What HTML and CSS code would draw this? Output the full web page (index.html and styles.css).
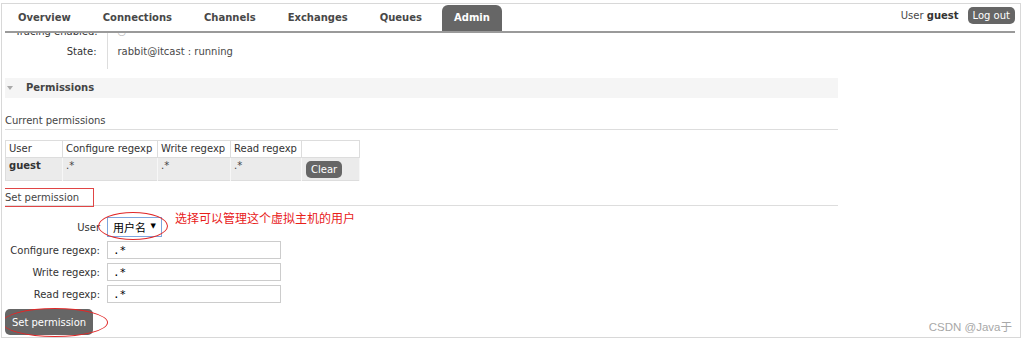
FILE: index.html
```html
<!DOCTYPE html>
<html lang="en">
<head>
    <meta charset="UTF-8">
    <meta name="viewport" content="width=device-width, initial-scale=1.0">
    <title>RabbitMQ Management - Admin</title>
    <link rel="stylesheet" href="styles.css">
</head>
<body>
    <div class="frame">
        <div class="header">
            <ul class="tabs">
                <li>Overview</li>
                <li>Connections</li>
                <li>Channels</li>
                <li>Exchanges</li>
                <li>Queues</li>
                <li class="selected">Admin</li>
            </ul>
            <div class="login">
                <span>User <b>guest</b></span>
                <button class="btn">Log out</button>
            </div>
        </div>

        <div class="main">
            <table class="facts">
                <colgroup>
                    <col style="width: 102px">
                    <col style="width: 300px">
                </colgroup>
                <tr>
                    <th>Tracing enabled:</th>
                    <td><span class="tick">○</span></td>
                </tr>
                <tr>
                    <th>State:</th>
                    <td>rabbit@itcast : running</td>
                </tr>
            </table>

            <div class="section">
                <h2><span class="arrow"></span>Permissions</h2>
                <div class="hider">
                    <h3>Current permissions</h3>
                    <table class="list">
                        <colgroup>
                            <col style="width: 57px">
                            <col style="width: 95px">
                            <col style="width: 73px">
                            <col style="width: 71px">
                            <col style="width: 58px">
                        </colgroup>
                        <tr>
                            <th>User</th>
                            <th>Configure regexp</th>
                            <th>Write regexp</th>
                            <th>Read regexp</th>
                            <th></th>
                        </tr>
                        <tr>
                            <td><b>guest</b></td>
                            <td>.*</td>
                            <td>.*</td>
                            <td>.*</td>
                            <td class="action"><button class="btn">Clear</button></td>
                        </tr>
                    </table>

                    <h3 class="marked">Set permission</h3>
                    <form class="perm-form">
                        <label for="user">User</label>
                        <div class="picker">
                            <select id="user">
                                <option>用户名</option>
                            </select>
                            <span class="ring ring-user"></span>
                            <span class="note">选择可以管理这个虚拟主机的用户</span>
                        </div>

                        <label for="configure">Configure regexp:</label>
                        <input type="text" id="configure" value=".*">

                        <label for="write">Write regexp:</label>
                        <input type="text" id="write" value=".*">

                        <label for="read">Read regexp:</label>
                        <input type="text" id="read" value=".*">
                    </form>
                    <div class="submit">
                        <button class="btn big">Set permission</button>
                        <span class="ring ring-submit"></span>
                    </div>
                </div>
            </div>
        </div>

        <span class="watermark">CSDN @Java于</span>
    </div>
</body>
</html>
```

FILE: styles.css
```css
body {
    margin: 0;
    background-color: #ffffff;
    color: #484848;
    font-family: "DejaVu Sans", Verdana, sans-serif;
    font-size: 10px;
}

.frame {
    position: relative;
    box-sizing: border-box;
    width: 1020px;
    height: 335px;
    margin: 3px 0 0 1px;
    padding: 0 5px 0 3px;
    border: 1px solid #d8d8d8;
    display: flex;
    flex-direction: column;
    overflow: hidden;
}

/* Top navigation */
.header {
    display: flex;
    justify-content: space-between;
    align-items: flex-start;
    height: 27px;
    border-bottom: 2px solid #9a9a9a;
    flex-shrink: 0;
    position: relative;
    z-index: 1;
    background-color: #ffffff;
}

.tabs {
    display: flex;
    gap: 8px;
    list-style: none;
    margin: 0;
    padding: 1px 0 0 1px;
}

.tabs li {
    height: 26px;
    line-height: 26px;
    padding: 0 12px;
    font-weight: bold;
    color: #484848;
    border-radius: 6px 6px 0 0;
}

.tabs li.selected {
    background-color: #666666;
    color: #ffffff;
}

.login {
    display: flex;
    align-items: center;
    gap: 9px;
    padding-top: 3px;
    color: #484848;
}

.login b {
    color: #333333;
}

.btn {
    height: 17px;
    padding: 0 5px;
    border: none;
    border-radius: 5px;
    background-color: #666666;
    color: #ffffff;
    font-family: "DejaVu Sans", Verdana, sans-serif;
    font-size: 10px;
    white-space: nowrap;
    cursor: pointer;
}

.btn.big {
    height: 26px;
    padding: 0;
}

/* Content */
.main {
    flex: 1;
    width: 833px;
    overflow: hidden;
}

.facts {
    border-collapse: collapse;
    table-layout: fixed;
    width: 402px;
    margin-top: -12px;
}

.facts th,
.facts td {
    padding: 4px 10px 2px;
    line-height: 14px;
    text-align: left;
    font-weight: normal;
    white-space: nowrap;
}

.facts th {
    text-align: right;
    color: #333333;
    border-right: 1px solid #dddddd;
}

.facts tr:last-child th,
.facts tr:last-child td {
    padding-bottom: 10px;
}

.facts .tick {
    color: #bbbbbb;
}

.section {
    margin-top: 9px;
}

.section h2 {
    display: flex;
    align-items: center;
    margin: 0;
    padding: 3px 0 3px 2px;
    background-color: #f5f5f5;
    font-size: 10px;
    line-height: 14px;
    color: #444444;
}

.arrow {
    width: 0;
    height: 0;
    margin-right: 13px;
    border-left: 3px solid transparent;
    border-right: 3px solid transparent;
    border-top: 4px solid #aaaaaa;
}

.hider h3 {
    margin: 16px 0 0;
    padding-bottom: 1px;
    border-bottom: 1px solid #dddddd;
    font-size: 10px;
    font-weight: normal;
    line-height: 14px;
    color: #444444;
}

.hider h3.marked {
    position: relative;
    margin-top: 10px;
    padding-bottom: 0;
}

.hider h3.marked::after {
    content: "";
    position: absolute;
    left: -4px;
    top: -3px;
    width: 91px;
    height: 17px;
    border: 1px solid #e04545;
}

.list {
    width: 355px;
    margin-top: 10px;
    border-collapse: collapse;
    table-layout: fixed;
    border: 1px solid #dddddd;
}

.list th {
    padding: 1px 3px;
    line-height: 14px;
    text-align: left;
    font-weight: normal;
    color: #333333;
    border: 1px solid #dddddd;
    white-space: nowrap;
    overflow: hidden;
}

.list td {
    height: 20px;
    padding: 1px 3px;
    line-height: 14px;
    vertical-align: top;
    background-color: #ebebeb;
    border-right: 1px solid #f7f7f7;
    color: #444444;
}

.list td b {
    color: #333333;
}

.list td.action {
    vertical-align: middle;
    padding: 0 4px;
}

/* Set permission form */
.perm-form {
    display: grid;
    grid-template-columns: 95px 174px;
    column-gap: 7px;
    row-gap: 4px;
    align-items: center;
    margin-top: 11px;
}

.perm-form label {
    text-align: right;
    color: #333333;
}

.picker {
    position: relative;
    width: 55px;
    height: 20px;
}

.picker select {
    appearance: none;
    -webkit-appearance: none;
    box-sizing: border-box;
    width: 100%;
    height: 100%;
    padding: 0 0 0 5px;
    border: 1px solid #7ea6dd;
    border-radius: 0;
    background-color: #ffffff;
    color: #000000;
    font-family: "Noto Sans CJK SC", sans-serif;
    font-size: 11px;
}

.picker::after {
    content: "▼";
    position: absolute;
    right: 6px;
    top: 5px;
    font-size: 7px;
    color: #000000;
    pointer-events: none;
}

.perm-form input {
    box-sizing: border-box;
    height: 18px;
    padding: 0 5px;
    border: 1px solid #cccccc;
    font-family: "DejaVu Sans Mono", monospace;
    font-size: 11px;
    color: #000000;
}

.ring {
    position: absolute;
    border: 1px solid #e02828;
    border-radius: 50%;
    pointer-events: none;
}

.ring-user {
    left: -9px;
    top: -5px;
    width: 68px;
    height: 26px;
}

.note {
    position: absolute;
    left: 68px;
    top: -6px;
    white-space: nowrap;
    color: #e8201a;
    font-family: "Noto Sans CJK SC", sans-serif;
    font-size: 12px;
    line-height: 14px;
}

.submit {
    position: relative;
    width: 88px;
    margin-top: 6px;
}

.submit .btn {
    width: 88px;
}

.ring-submit {
    left: -3px;
    top: -1px;
    width: 104px;
    height: 27px;
}

.watermark {
    position: absolute;
    right: 8px;
    bottom: 3px;
    color: #a8a8a8;
    font-family: "Liberation Sans", "Noto Sans CJK SC", sans-serif;
    font-size: 11.5px;
    line-height: 14px;
}
```
